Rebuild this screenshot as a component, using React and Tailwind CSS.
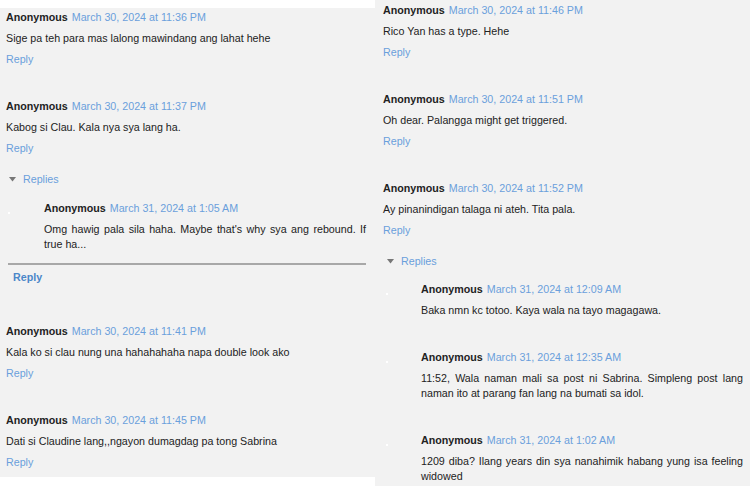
const font = { fontFamily: '"Liberation Sans", Arial, sans-serif' };

const left = [
  { time: "March 30, 2024 at 11:36 PM", text: "Sige pa teh para mas lalong mawindang ang lahat hehe" },
  { time: "March 30, 2024 at 11:37 PM", text: "Kabog si Clau. Kala nya sya lang ha." },
];

const leftAfter = [
  { time: "March 30, 2024 at 11:41 PM", text: "Kala ko si clau nung una hahahahaha napa double look ako" },
  { time: "March 30, 2024 at 11:45 PM", text: "Dati si Claudine lang,,ngayon dumagdag pa tong Sabrina" },
];

const right = [
  { time: "March 30, 2024 at 11:46 PM", text: "Rico Yan has a type. Hehe" },
  { time: "March 30, 2024 at 11:51 PM", text: "Oh dear. Palangga might get triggered." },
  { time: "March 30, 2024 at 11:52 PM", text: "Ay pinanindigan talaga ni ateh. Tita pala." },
];

const rightReplies = [
  { time: "March 31, 2024 at 12:09 AM", text: "Baka nmn kc totoo. Kaya wala na tayo magagawa." },
  {
    time: "March 31, 2024 at 12:35 AM",
    text: "11:52, Wala naman mali sa post ni Sabrina. Simpleng post lang naman ito at parang fan lang na bumati sa idol.",
  },
  {
    time: "March 31, 2024 at 1:02 AM",
    text: "1209 diba? Ilang years din sya nanahimik habang yung isa feeling widowed",
  },
];

const Header = ({ time }) => (
  <div className="flex items-center gap-[4px] leading-[15px]">
    <span className="font-bold text-[#222]">Anonymous</span>
    <span className="text-[#6a9fdc]">{time}</span>
  </div>
);

const Comment = ({ time, text, first }) => (
  <div className={first ? "" : "mt-[32px]"}>
    <Header time={time} />
    <p className="mt-[6px] leading-[15px] text-[#222]">{text}</p>
    <div className="mt-[6px] leading-[15px] text-[#6a9fdc]">Reply</div>
  </div>
);

const SubComment = ({ time, text, first, dot }) => (
  <div className={`flex ${first ? "" : "mt-[32px]"}`}>
    <div className="w-[38px] shrink-0">
      <div className={`mt-[11px] ${dot} h-[2px] w-[2px] bg-white`}></div>
    </div>
    <div className="flex-1">
      <Header time={time} />
      <p className="mt-[6px] text-justify leading-[15px] text-[#222]">{text}</p>
    </div>
  </div>
);

const RepliesToggle = ({ offset }) => (
  <div className={`flex items-center leading-[15px] ${offset}`}>
    <svg width="7" height="5" viewBox="0 0 7 5" className="mr-[7px]">
      <path d="M0 0 L7 0 L3.5 4.5 Z" fill="#777" />
    </svg>
    <span className="text-[#6a9fdc]">Replies</span>
  </div>
);

export default function App() {
  return (
    <div className="flex h-[486px] w-[750px] bg-white text-[10.7px]" style={font}>
      <div className="mt-[8px] h-[469px] w-[375px] bg-[#f2f2f2] pl-[6px] pr-[9px] pt-[2px]">
        {left.map((c, i) => (
          <Comment key={i} {...c} first={i === 0} />
        ))}
        <div className="mt-[16px]">
          <RepliesToggle offset="ml-[3px]" />
        </div>
        <div className="mt-[14px]">
          <SubComment
            first
            dot="ml-[2px]"
            time="March 31, 2024 at 1:05 AM"
            text="Omg hawig pala sila haha. Maybe that's why sya ang rebound. If true ha..."
          />
        </div>
        <div className="mt-[11px] ml-[2px] h-[2px] bg-[#a8a8a8]"></div>
        <div className="mt-[5px] ml-[7px] font-bold leading-[15px] text-[#4b87c9]">Reply</div>
        <div className="mt-[39px]">
          {leftAfter.map((c, i) => (
            <Comment key={i} {...c} first={i === 0} />
          ))}
        </div>
      </div>
      <div className="h-[486px] w-[375px] bg-[#f2f2f2] pl-[8px] pr-[7px] pt-[3px]">
        {right.map((c, i) => (
          <Comment key={i} {...c} first={i === 0} />
        ))}
        <div className="mt-[16px]">
          <RepliesToggle offset="ml-[4px]" />
        </div>
        <div className="mt-[13px]">
          {rightReplies.map((c, i) => (
            <SubComment key={i} {...c} first={i === 0} dot="ml-[3px]" />
          ))}
        </div>
      </div>
    </div>
  );
}
